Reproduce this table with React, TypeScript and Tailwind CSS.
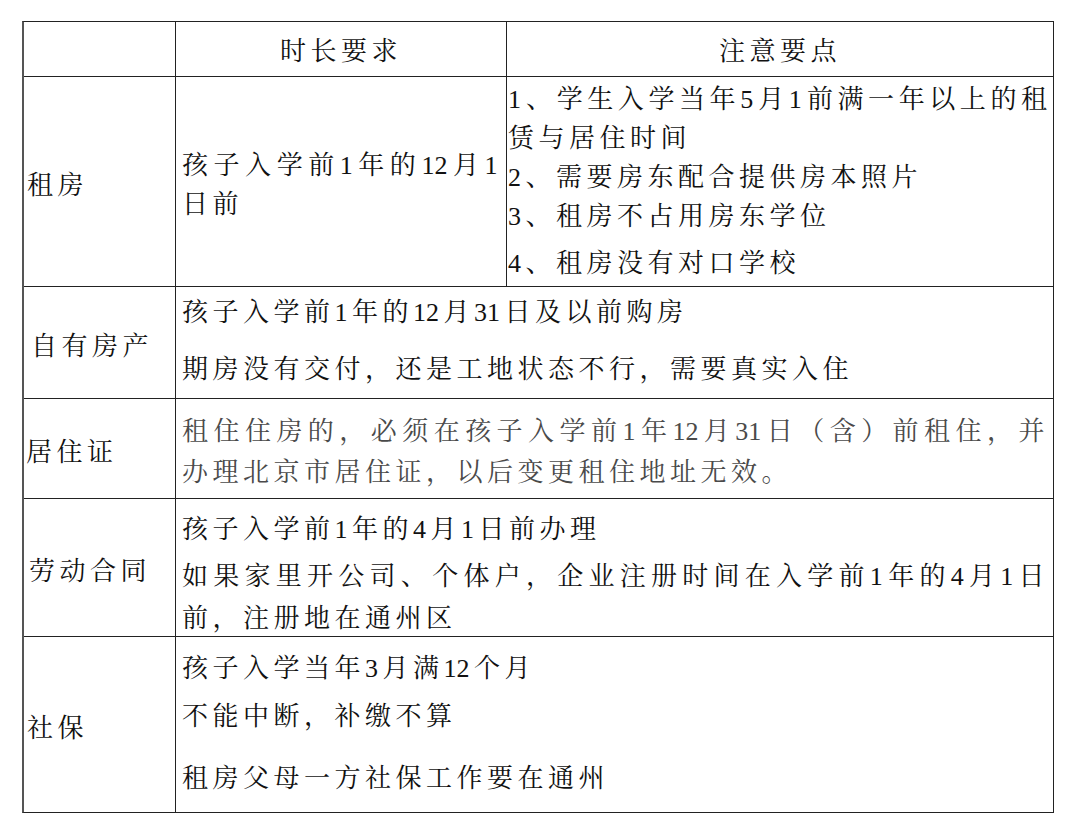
import React from "react";

const font = {
  fontFamily:
    '"Liberation Serif", "Noto Serif CJK SC", "Noto Sans CJK SC", serif',
};

// digit runs keep their natural width, like the Word grid: spacing only after the run
const T = (p: { s: string }) => (
  <>
    {p.s.split(/(\d+)/).map((part, i) =>
      /^\d+$/.test(part) ? (
        <span key={i} className="tracking-normal mr-[4.5px]">
          {part}
        </span>
      ) : (
        part
      )
    )}
  </>
);

const Label = (p: { text: string; className?: string }) => (
  <div
    className={`w-[152px] shrink-0 border-r-[1.5px] border-[#222] flex items-center pt-[7px] ${
      p.className || "pl-[3px]"
    }`}
  >
    {p.text}
  </div>
);

// a line that wraps in the reference: fill the cell width like justified Word text
const Fill = (p: { s: string; className?: string }) => (
  <div className={`[text-align:justify] [text-align-last:justify] ${p.className || ""}`}>
    <T s={p.s} />
  </div>
);

const Line = (p: { s: string; className?: string }) => (
  <div className={p.className}>
    <T s={p.s} />
  </div>
);

export default function App() {
  return (
    <div className="min-h-[835px] w-[1080px] bg-white pl-[22px] pt-[21px]" style={font}>
      <div className="w-[1032px] border-[1.5px] border-[#222] border-l-[#555] border-l-2 text-[26px] tracking-[4.5px] leading-[39px] text-[#111]">
        {/* header */}
        <div className="flex h-[55px] border-b-[1.5px] border-[#222]">
          <div className="w-[152px] shrink-0 border-r-[1.5px] border-[#222]" />
          <div className="w-[331px] shrink-0 border-r-[1.5px] border-[#222] flex items-center justify-center pt-1">
            时长要求
          </div>
          <div className="flex-1 flex items-center justify-center pt-1">注意要点</div>
        </div>

        {/* 租房 */}
        <div className="flex h-[210px] border-b-[1.5px] border-[#222]">
          <Label text="租房" />
          <div className="w-[331px] shrink-0 border-r-[1.5px] border-[#222] flex flex-col justify-center pt-[6px] pl-[6px] pr-[4px]">
            <Fill s="孩子入学前1年的12月1" />
            <Line s="日前" />
          </div>
          <div className="flex-1 pl-[1px] pr-[2px] pt-[3px]">
            <Fill s="1、学生入学当年5月1前满一年以上的租" className="tracking-[4px]" />
            <Line s="赁与居住时间" />
            <Line s="2、需要房东配合提供房本照片" />
            <Line s="3、租房不占用房东学位" />
            <Line s="4、租房没有对口学校" className="mt-[8px]" />
          </div>
        </div>

        {/* 自有房产 */}
        <div className="flex h-[112px] border-b-[1.5px] border-[#222]">
          <Label text="自有房产" className="pl-[7px]" />
          <div className="flex-1 pl-[6px] pr-[4px] pt-[6px]">
            <Line s="孩子入学前1年的12月31日及以前购房" />
            <Line s="期房没有交付，还是工地状态不行，需要真实入住" className="mt-[18px]" />
          </div>
        </div>

        {/* 居住证 */}
        <div className="flex h-[100px] border-b-[1.5px] border-[#222]">
          <Label text="居住证" className="pl-[2px]" />
          <div className="flex-1 pl-[6px] pr-[4px] pt-[12px] leading-[41px] text-[#4a4a4a]">
            <Fill s="租住住房的，必须在孩子入学前1年12月31日（含）前租住，并" />
            <Line s="办理北京市居住证，以后变更租住地址无效。" />
          </div>
        </div>

        {/* 劳动合同 */}
        <div className="flex h-[138px] border-b-[1.5px] border-[#222]">
          <Label text="劳动合同" className="pl-[5px]" />
          <div className="flex-1 pl-[6px] pr-[4px] pt-[11px]">
            <Line s="孩子入学前1年的4月1日前办理" />
            <div className="mt-[7px] leading-[42px]">
              <Fill s="如果家里开公司、个体户，企业注册时间在入学前1年的4月1日" />
              <Line s="前，注册地在通州区" />
            </div>
          </div>
        </div>

        {/* 社保 */}
        <div className="flex h-[175px]">
          <Label text="社保" />
          <div className="flex-1 pl-[6px] pr-[4px] pt-[12px]">
            <Line s="孩子入学当年3月满12个月" />
            <Line s="不能中断，补缴不算" className="mt-[9px]" />
            <Line s="租房父母一方社保工作要在通州" className="mt-[23px]" />
          </div>
        </div>
      </div>
    </div>
  );
}
